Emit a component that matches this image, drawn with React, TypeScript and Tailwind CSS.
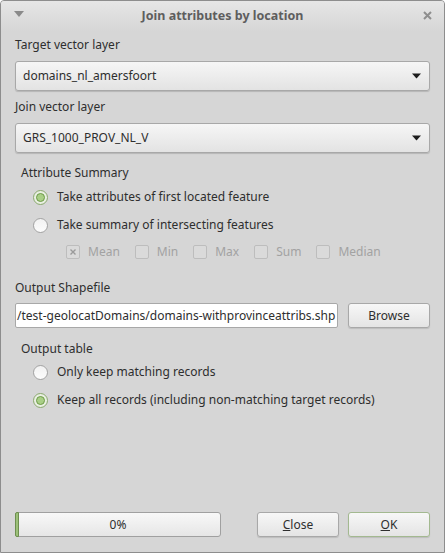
import React from 'react'

const font = { fontFamily: '"Noto Sans", "Open Sans", sans-serif' }

function Combo({ value }: { value: string }) {
  return (
    <div className="flex h-[30px] items-center justify-between rounded-[3px] border border-[#a8a8a8] bg-gradient-to-b from-[#f6f6f6] to-[#e3e3e3] pl-[7px] pr-[8px] shadow-[0_1px_1px_rgba(0,0,0,0.15)]">
      <span>{value}</span>
      <svg width="9" height="6" viewBox="0 0 9 6">
        <path d="M0 0.5 H9 L4.5 5.5 Z" fill="#1c1c1c" />
      </svg>
    </div>
  )
}

function Radio({ checked, label }: { checked?: boolean; label: string }) {
  return (
    <div className="flex h-[20px] items-center pl-[18px]">
      {checked ? (
        <span className="flex h-[15px] w-[15px] items-center justify-center rounded-full border border-[#8aa86e] bg-[#e9efe2]">
          <span className="h-[9px] w-[9px] rounded-full border border-[#6e9a49] bg-[#a9cf86]" />
        </span>
      ) : (
        <span className="h-[15px] w-[15px] rounded-full border border-[#a3a3a3] bg-gradient-to-b from-[#f2f2f2] to-[#fcfcfc]" />
      )}
      <span className="ml-[9px]">{label}</span>
    </div>
  )
}

function Check({ label, checked }: { label: string; checked?: boolean }) {
  return (
    <div className="flex items-center">
      <span className="flex h-[14px] w-[14px] items-center justify-center rounded-[2px] border border-[#bdbdbd] bg-[#dadada]">
        {checked && (
          <svg width="6" height="6" viewBox="0 0 6 6">
            <path d="M0.5 0.5 L5.5 5.5 M5.5 0.5 L0.5 5.5" stroke="#9a9a9a" strokeWidth="1.4" />
          </svg>
        )}
      </span>
      <span className="ml-[8px] text-[#a2a2a2]">{label}</span>
    </div>
  )
}

function Button({ children, def }: { children: React.ReactNode; def?: boolean }) {
  return (
    <div
      className={
        'flex h-[25px] w-[82px] items-center justify-center rounded-[3px] border bg-gradient-to-b from-[#f7f7f7] to-[#e4e4e4] shadow-[0_1px_1px_rgba(0,0,0,0.12)] ' +
        (def ? 'border-[#a3b990]' : 'border-[#a8a8a8]')
      }
    >
      {children}
    </div>
  )
}

export default function App() {
  return (
    <div
      className="flex h-[553px] w-[445px] flex-col overflow-hidden rounded-t-[4px] border border-[#8d8d8d] bg-[#d6d6d6] text-[12px] text-[#2e2e2e]"
      style={font}
    >
      {/* title bar */}
      <div className="relative flex h-[30px] shrink-0 items-center justify-center bg-gradient-to-b from-[#e6e6e6] to-[#d6d6d6]">
        <svg className="absolute left-[13px] top-[10px]" width="10" height="6" viewBox="0 0 10 6">
          <path d="M0 0 H10 L5 6 Z" fill="#8a8a8a" />
        </svg>
        <span className="text-[12.5px] font-bold text-[#5e5e5e]">Join attributes by location</span>
        <svg className="absolute right-[12px] top-[10px]" width="9" height="9" viewBox="0 0 9 9">
          <path d="M1 1 L8 8 M8 1 L1 8" stroke="#8e8e8e" strokeWidth="2" />
        </svg>
      </div>

      <div className="flex flex-1 flex-col px-[14px]">
        <div className="mt-[5px] flex h-[18px] items-center">Target vector layer</div>
        <div className="mt-[7px]">
          <Combo value="domains_nl_amersfoort" />
        </div>
        <div className="mt-[7px] flex h-[18px] items-center">Join vector layer</div>
        <div className="mt-[7px]">
          <Combo value="GRS_1000_PROV_NL_V" />
        </div>

        <div className="mt-[11px] flex h-[18px] items-center pl-[6px]">Attribute Summary</div>
        <div className="mt-[5px]">
          <Radio checked label="Take attributes of first located feature" />
        </div>
        <div className="mt-[8px]">
          <Radio label="Take summary of intersecting features" />
        </div>
        <div className="mt-[8px] flex h-[18px] items-center gap-[15px] pl-[51px]">
          <Check checked label="Mean" />
          <Check label="Min" />
          <Check label="Max" />
          <Check label="Sum" />
          <Check label="Median" />
        </div>

        <div className="mt-[18px] flex h-[18px] items-center">Output Shapefile</div>
        <div className="mt-[6px] flex h-[25px] items-center gap-[10px]">
          <div className="flex h-[25px] flex-1 items-center overflow-hidden whitespace-nowrap rounded-[2px] border border-[#a8a8a8] bg-white px-[1px]">
            /test-geolocatDomains/domains-withprovinceattribs.shp
          </div>
          <Button>Browse</Button>
        </div>

        <div className="mt-[12px] flex h-[18px] items-center pl-[6px]">Output table</div>
        <div className="mt-[4px]">
          <Radio label="Only keep matching records" />
        </div>
        <div className="mt-[8px]">
          <Radio checked label="Keep all records (including non-matching target records)" />
        </div>

        <div className="flex-1" />

        <div className="mb-[15px] flex h-[25px] items-center">
          <div className="relative flex h-[25px] w-[206px] items-center justify-center rounded-[3px] border border-[#a0a0a0] bg-gradient-to-b from-[#f8f8f8] to-[#e6e6e6]">
            <span className="absolute bottom-[-1px] left-[-1px] top-[-1px] w-[4px] rounded-l-[2px] border border-[#6d8f4f] bg-[#9cc079]" />
            <span>0%</span>
          </div>
          <div className="flex-1" />
          <Button>
            <span>
              <span className="underline">C</span>lose
            </span>
          </Button>
          <div className="w-[9px]" />
          <Button def>
            <span>
              <span className="underline">O</span>K
            </span>
          </Button>
        </div>
      </div>
    </div>
  )
}
